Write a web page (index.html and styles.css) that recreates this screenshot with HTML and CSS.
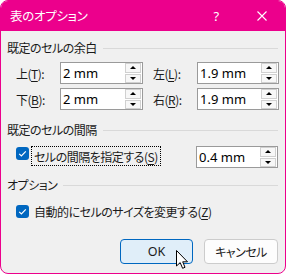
FILE: index.html
```html
<!DOCTYPE html>
<html lang="ja">
<head>
<meta charset="utf-8">
<link rel="stylesheet" href="styles.css">
</head>
<body>
<div class="window">
  <div class="titlebar">
    <span class="title">表のオプション</span>
    <span class="tbtn help">?</span>
    <span class="tbtn close"><svg width="10" height="10" viewBox="0 0 10 10"><path d="M0.5 0.5 L9.5 9.5 M9.5 0.5 L0.5 9.5" stroke="#fff" stroke-width="1.1" fill="none"/></svg></span>
  </div>
  <div class="content">
    <div class="group-title"><span>既定のセルの余白</span><span class="rule"></span></div>
    <div class="grid">
      <span class="lab">上(<u>T</u>):</span>
      <div class="spin"><span class="val">2 mm</span><div class="arrows"><span class="arr"><i class="up"></i></span><span class="arr"><i class="down"></i></span></div></div>
      <span class="lab lab2">左(<u>L</u>):</span>
      <div class="spin"><span class="val">1.9 mm</span><div class="arrows"><span class="arr"><i class="up"></i></span><span class="arr"><i class="down"></i></span></div></div>
      <span class="lab">下(<u>B</u>):</span>
      <div class="spin"><span class="val">2 mm</span><div class="arrows"><span class="arr"><i class="up"></i></span><span class="arr"><i class="down"></i></span></div></div>
      <span class="lab lab2">右(<u>R</u>):</span>
      <div class="spin"><span class="val">1.9 mm</span><div class="arrows"><span class="arr"><i class="up"></i></span><span class="arr"><i class="down"></i></span></div></div>
    </div>
    <div class="group-title g2"><span>既定のセルの間隔</span><span class="rule"></span></div>
    <div class="check-row">
      <span class="cb"><svg width="13" height="13" viewBox="0 0 13 13"><path d="M3.2 6.8 L5.4 9 L9.8 4.4" stroke="#fff" stroke-width="1.2" fill="none"/></svg></span>
      <span class="focus">セルの間隔を指定する(<u>S</u>)</span>
      <div class="spin spin-r"><span class="val">0.4 mm</span><div class="arrows"><span class="arr"><i class="up"></i></span><span class="arr"><i class="down"></i></span></div></div>
    </div>
    <div class="group-title g3"><span>オプション</span><span class="rule"></span></div>
    <div class="check-row2">
      <span class="cb"><svg width="13" height="13" viewBox="0 0 13 13"><path d="M3.2 6.8 L5.4 9 L9.8 4.4" stroke="#fff" stroke-width="1.2" fill="none"/></svg></span>
      <span class="cb-label">自動的にセルのサイズを変更する(<u>Z</u>)</span>
    </div>
    <div class="buttons">
      <span class="btn primary">OK</span>
      <span class="btn">キャンセル</span>
    </div>
  </div>
  <svg class="cursor" width="13" height="20" viewBox="0 0 13 20"><path d="M0.5 0.5 L0.5 16 L4.2 12.6 L6.6 18.3 L9 17.3 L6.7 11.8 L11.5 11.8 Z" fill="#fff" stroke="#000" stroke-width="1" stroke-linejoin="miter"/></svg>
</div>
</body>
</html>
```
FILE: styles.css
```css
html, body {
  margin: 0;
  padding: 0;
  background: #ffffff;
}
body {
  font-family: "Noto Sans CJK JP", "Noto Sans", sans-serif;
  font-size: 12px;
  font-feature-settings: "palt";
  letter-spacing: -0.5px;
  color: #1a1a1a;
}
.window {
  position: relative;
  width: 286px;
  height: 274px;
  box-sizing: border-box;
  border: 1px solid #ec008c;
  border-radius: 8px;
  overflow: hidden;
  background: #f0f0f0;
  display: flex;
  flex-direction: column;
}
.titlebar {
  height: 30px;
  background: #ec008c;
  display: flex;
  align-items: center;
  color: #fff;
  padding-left: 9px;
  padding-bottom: 1px;
  box-sizing: border-box;
}
.title {
  flex: 1;
  font-size: 12.5px;
  line-height: 16px;
  letter-spacing: -0.3px;
}
.tbtn {
  width: 46px;
  display: flex;
  justify-content: center;
  align-items: center;
  height: 20px;
}
.help {
  font-family: "Noto Sans", sans-serif;
  font-size: 13px;
}
.content {
  flex: 1;
  padding: 9px 7px 0 6px;
  display: flex;
  flex-direction: column;
}
.group-title {
  display: flex;
  align-items: center;
  gap: 6px;
  height: 16px;
  line-height: 16px;
  white-space: nowrap;
}
.rule {
  flex: 1;
  height: 1px;
  background: #d9d9d9;
}
.g2 { margin-top: 12px; }
.g3 { margin-top: 9px; }
.grid {
  margin-top: 6px;
  padding-left: 9px;
  display: grid;
  grid-template-columns: 44px 83px 54px 82px;
  row-gap: 4px;
}
.lab {
  display: flex;
  align-items: center;
  height: 22px;
  white-space: nowrap;
}
.lab2 { padding-left: 10px; }
u {
  text-decoration: underline;
  text-underline-offset: 2px;
  text-decoration-thickness: 1px;
}
.spin {
  height: 22px;
  box-sizing: border-box;
  border: 1px solid #9a9a9a;
  background: #fff;
  display: flex;
  align-items: stretch;
  justify-content: space-between;
  padding-left: 2px;
}
.val {
  font-family: "Noto Sans", sans-serif;
  font-size: 13px;
  letter-spacing: 0;
  display: flex;
  align-items: center;
  color: #000;
  font-feature-settings: normal;
}
.arrows {
  width: 16px;
  margin-right: 1px;
  display: flex;
  flex-direction: column;
  gap: 1px;
}
.arr {
  flex: 1;
  box-sizing: border-box;
  border: 1px solid #d0d0d0;
  background: #f7f7f7;
  display: flex;
  align-items: center;
  justify-content: center;
}
.arr i {
  width: 0;
  height: 0;
  border-left: 3px solid transparent;
  border-right: 3px solid transparent;
}
.arr .up { border-bottom: 3px solid #000; }
.arr .down { border-top: 3px solid #000; }
.check-row {
  margin-top: 8px;
  padding-left: 9px;
  display: flex;
  align-items: flex-start;
  height: 22px;
}
.cb {
  width: 13px;
  height: 13px;
  background: #0067c0;
  border-radius: 3px;
  display: flex;
  flex-shrink: 0;
}
.check-row .cb { margin-top: 1px; }
.focus {
  margin-left: 2px;
  height: 20px;
  box-sizing: border-box;
  border: 1px dotted #000;
  padding: 0 2px;
  display: flex;
  align-items: center;
  white-space: nowrap;
}
.spin-r {
  margin-left: auto;
  width: 82px;
}
.check-row2 {
  margin-top: 9px;
  padding-left: 9px;
  display: flex;
  align-items: center;
  height: 18px;
  gap: 5px;
  white-space: nowrap;
}
.buttons {
  margin-top: 19px;
  display: flex;
  justify-content: flex-end;
  gap: 11px;
}
.btn {
  width: 74px;
  height: 25px;
  box-sizing: border-box;
  border: 1px solid #cccccc;
  border-radius: 4px;
  background: #fdfdfd;
  display: flex;
  align-items: center;
  justify-content: center;
}
.btn.primary {
  width: 73px;
  border-color: #0067c0;
  background: #e0eef9;
  font-family: "Noto Sans", sans-serif;
  font-size: 12.5px;
  letter-spacing: 0;
}
.cursor {
  position: absolute;
  left: 175px;
  top: 249px;
}
```
